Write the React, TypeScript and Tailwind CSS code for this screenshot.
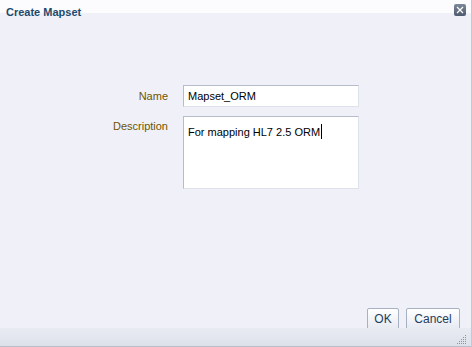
export default function App() {
  return (
    <div className="relative flex h-[347px] w-[472px] flex-col overflow-hidden border-r border-r-[#c3c7d6] bg-[#eff0f8] font-['Liberation_Sans',Arial,sans-serif]">
      {/* title bar */}
      <div className="flex h-[25px] items-start justify-between bg-[linear-gradient(to_bottom,#fcfcfe_0px,#fcfcfe_13px,#eff0f8_13px)] pl-[6px] pr-[5px]">
        <span className="mt-[6px] text-[11px] font-bold leading-[13px] text-[#1d4a6c]">Create Mapset</span>
        <button className="mt-[4px] flex h-[12px] w-[12px] items-center justify-center rounded-[2px] bg-[linear-gradient(to_bottom,#7d889a,#4f5b6e)]">
          <svg width="8" height="8" viewBox="0 0 8 8">
            <path d="M1 1 L7 7 M7 1 L1 7" stroke="#ffffff" strokeWidth="1.2" />
          </svg>
        </button>
      </div>

      {/* form */}
      <div className="flex-1 pt-[60px]">
        <div className="grid grid-cols-[168px_176px] gap-x-[15px] gap-y-[9px] text-[11px]">
          <label className="flex items-center justify-end text-[#6f5500]">Name</label>
          <div className="flex h-[22px] items-center border border-t-[#b6bccb] border-l-[#b6bccb] border-r-[#dfe2ea] border-b-[#dfe2ea] bg-white px-[4px] text-[#000]">
            Mapset_ORM
          </div>
          <label className="flex justify-end pt-[2px] text-[#6f5500]">Description</label>
          <div className="h-[73px] border border-t-[#b6bccb] border-l-[#b6bccb] border-r-[#dfe2ea] border-b-[#dfe2ea] bg-white px-[4px] pt-[4px] text-[#000]">
            <span>For mapping HL7 2.5 ORM</span>
            <span className="ml-[1px] inline-block h-[15px] w-px translate-y-[3px] bg-black" />
          </div>
        </div>
      </div>

      {/* buttons */}
      <div className="flex justify-end gap-[7px] pr-[11px]">
        <button className="h-[22px] w-[32px] rounded-[2px] border border-[#a8b1c2] bg-[linear-gradient(to_bottom,#ffffff,#e6eaf2)] text-[12px] text-[#1e3c5c]">
          OK
        </button>
        <button className="h-[22px] w-[54px] rounded-[2px] border border-[#a8b1c2] bg-[linear-gradient(to_bottom,#ffffff,#e6eaf2)] text-[12px] text-[#1e3c5c]">
          Cancel
        </button>
      </div>

      {/* footer band */}
      <div className="relative mt-[-2px] h-[19px] border-b border-b-[#b9bdc8] bg-[linear-gradient(to_bottom,#e9ebf3,#dde1ea)]">
        <svg className="absolute bottom-[1px] right-[4px]" width="11" height="11" viewBox="0 0 11 11">
          {[
            [9, 1], [9, 3], [7, 3], [9, 5], [7, 5], [5, 5], [9, 7], [7, 7], [5, 7], [3, 7], [9, 9], [7, 9], [5, 9], [3, 9], [1, 9],
          ].map(([x, y], i) => (
            <rect key={i} x={x} y={y} width="1" height="1" fill="#8b93a3" />
          ))}
        </svg>
      </div>
    </div>
  )
}
